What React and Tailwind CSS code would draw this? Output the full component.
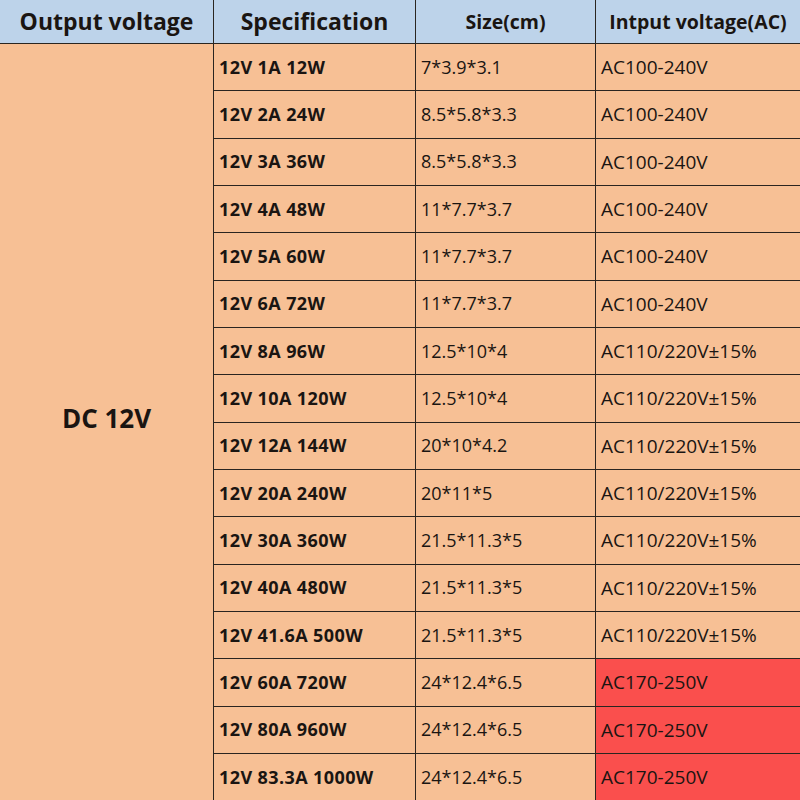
const rows = [
    ['12V 1A 12W', '7*3.9*3.1', 'AC100-240V'],
    ['12V 2A 24W', '8.5*5.8*3.3', 'AC100-240V'],
    ['12V 3A 36W', '8.5*5.8*3.3', 'AC100-240V'],
    ['12V 4A 48W', '11*7.7*3.7', 'AC100-240V'],
    ['12V 5A 60W', '11*7.7*3.7', 'AC100-240V'],
    ['12V 6A 72W', '11*7.7*3.7', 'AC100-240V'],
    ['12V 8A 96W', '12.5*10*4', 'AC110/220V±15%'],
    ['12V 10A 120W', '12.5*10*4', 'AC110/220V±15%'],
    ['12V 12A 144W', '20*10*4.2', 'AC110/220V±15%'],
    ['12V 20A 240W', '20*11*5', 'AC110/220V±15%'],
    ['12V 30A 360W', '21.5*11.3*5', 'AC110/220V±15%'],
    ['12V 40A 480W', '21.5*11.3*5', 'AC110/220V±15%'],
    ['12V 41.6A 500W', '21.5*11.3*5', 'AC110/220V±15%'],
    ['12V 60A 720W', '24*12.4*6.5', 'AC170-250V', true],
    ['12V 80A 960W', '24*12.4*6.5', 'AC170-250V', true],
    ['12V 83.3A 1000W', '24*12.4*6.5', 'AC170-250V', true],
]

export default function App() {
    return (
        <div
            className="w-[800px] h-[800px] overflow-hidden bg-[#2a2520] text-[#1a1512]"
            style={{ fontFamily: '"Open Sans", "Noto Sans", sans-serif' }}
        >
            <div className="grid grid-cols-[213px_201px_179px_204px] grid-rows-[43px_repeat(16,46.35px)] gap-px">
                <div className="bg-[#bdd3ea] flex items-center justify-center text-[23px] font-bold">Output voltage</div>
                <div className="bg-[#bdd3ea] flex items-center justify-center text-[23px] font-bold">Specification</div>
                <div className="bg-[#bdd3ea] flex items-center justify-center text-[19.5px] font-bold">Size(cm)</div>
                <div className="bg-[#bdd3ea] flex items-center justify-center text-[19.5px] font-bold">Intput voltage(AC)</div>

                <div className="row-span-16 bg-[#f7c095] flex items-center justify-center text-[26px] font-bold pb-[8px]">
                    DC 12V
                </div>

                {rows.map(([spec, size, input, red], i) => (
                    <div key={i} className="contents">
                        <div className="bg-[#f7c095] flex items-center pl-[5px] text-[18px] tracking-[0.4px] font-bold">{spec}</div>
                        <div className="bg-[#f7c095] flex items-center pl-[5px] text-[18px]">{size}</div>
                        <div className={`${red ? 'bg-[#fa4f4d]' : 'bg-[#f7c095]'} flex items-center pl-[5px] text-[19px]`}>
                            {input}
                        </div>
                    </div>
                ))}
            </div>
        </div>
    )
}
